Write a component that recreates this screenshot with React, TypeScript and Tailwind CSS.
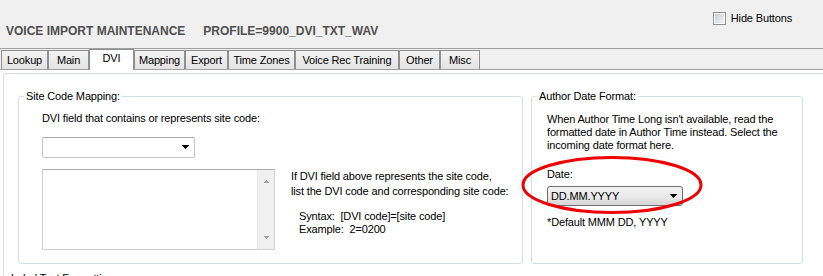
import React from 'react';

const tabs = [
  { label: 'Lookup', w: 'w-[47px]' },
  { label: 'Main', w: 'w-[41px]' },
  { label: 'DVI', w: 'w-[45px]', active: true },
  { label: 'Mapping', w: 'w-[51px]' },
  { label: 'Export', w: 'w-[43px]' },
  { label: 'Time Zones', w: 'w-[67px]' },
  { label: 'Voice Rec Training', w: 'w-[104px]' },
  { label: 'Other', w: 'w-[41px]' },
  { label: 'Misc', w: 'w-[40px]' },
];

function Caret({ className = '' }: { className?: string }) {
  return (
    <svg width="9" height="5" viewBox="0 0 9 5" className={className} shapeRendering="crispEdges">
      <path d="M1 0h7v1H1zM2 1h5v1H2zM3 2h3v1H3zM4 3h1v1H4z" fill="#000" />
    </svg>
  );
}

function ScrollArrow({ up }: { up?: boolean }) {
  return (
    <svg width="7" height="4" viewBox="0 0 7 4" shapeRendering="crispEdges">
      <path d={up ? 'M3 0h1v1H3zM2 1h3v1H2zM1 2h5v1H1z' : 'M1 0h5v1H1zM2 1h3v1H2zM3 2h1v1H3z'} fill="#a3a3a3" />
    </svg>
  );
}

export default function App() {
  return (
    <div className="relative w-[823px] h-[276px] overflow-hidden bg-[#f0f0f0] flex flex-col text-[11px] leading-[13px] tracking-[-0.15px] text-black font-['Liberation_Sans','DejaVu_Sans',sans-serif]">
      {/* header */}
      <div className="h-[48px] flex justify-between items-start shrink-0">
        <div className="pl-[6px] pt-[24px] text-[12px] leading-[14px] tracking-normal font-bold text-[#4f4f4f] whitespace-nowrap">
          <span>VOICE IMPORT MAINTENANCE</span>
          <span className="ml-[18px]">PROFILE=9900_DVI_TXT_WAV</span>
        </div>
        <label className="flex items-center gap-[5px] pt-[12px] pr-[31px]">
          <div className="w-[13px] h-[13px] border border-[#8e8f8f] bg-white p-[1px]">
            <div className="w-full h-full bg-gradient-to-br from-[#c9cdd3] to-[#f4f4f4]" />
          </div>
          <span>Hide Buttons</span>
        </label>
      </div>

      {/* tabs */}
      <div className="h-[22px] shrink-0 border-t border-b border-[#a0a0a0] flex items-end pl-[1px]">
        {tabs.map(t =>
          t.active ? (
            <div
              key={t.label}
              className={`${t.w} h-[21px] -mb-[1px] bg-white border border-b-0 border-[#8e8f8f] flex justify-center pt-[2px] relative z-10`}
            >
              {t.label}
            </div>
          ) : (
            <div
              key={t.label}
              className={`${t.w} h-[19px] bg-gradient-to-b from-[#f3f3f3] to-[#e3e3e3] border border-b-0 border-[#8e8f8f] flex justify-center pt-[3px]`}
            >
              {t.label}
            </div>
          )
        )}
      </div>

      {/* content */}
      <div className="flex-1 bg-white pt-[3px] pl-[3px]">
        <div className="h-full border-l border-t border-[#d9dfe6] rounded-tl-[3px]">
          <div className="flex gap-[8px] pl-[14px] pt-[16px]">
            <fieldset className="w-[505px] h-[174px] border border-[#d5dfe5] rounded-[3px]">
              <legend className="ml-[5px] px-[2px]">Site Code Mapping:</legend>
              <div className="pl-[23px]">
                <div className="mt-[9px]">DVI field that contains or represents site code:</div>
                <div className="mt-[12px] w-[153px] h-[21px] border border-[#c5c5c5] border-t-[#a9a9a9] rounded-[2px] bg-white flex items-center justify-end pr-[4px]">
                  <Caret />
                </div>
                <div className="mt-[11px] flex">
                  <div className="w-[233px] h-[81px] border border-[#cfd3d8] border-t-[#abadb3] bg-white flex justify-end">
                    <div className="w-[17px] h-full bg-[#f0f0f0] border-l border-[#e6e6e6] flex flex-col items-center justify-between pt-[10px] pb-[9px]">
                      <ScrollArrow up />
                      <ScrollArrow />
                    </div>
                  </div>
                  <div className="ml-[16px] whitespace-nowrap">
                    <div className="leading-[15px]">
                      If DVI field above represents the site code,
                      <br />
                      list the DVI code and corresponding site code:
                    </div>
                    <div className="mt-[11px] pl-[8px]">
                      <div>Syntax:&nbsp; [DVI code]=[site code]</div>
                      <div>Example:&nbsp; 2=0200</div>
                    </div>
                  </div>
                </div>
              </div>
            </fieldset>

            <fieldset className="w-[272px] h-[174px] border border-[#d5dfe5] rounded-[3px]">
              <legend className="ml-[5px] px-[2px]">Author Date Format:</legend>
              <div className="pl-[15px]">
                <div className="mt-[10px] whitespace-nowrap">
                  When Author Time Long isn't available, read the
                  <br />
                  formatted date in Author Time instead. Select the
                  <br />
                  incoming date format here.
                </div>
                <div className="mt-[16px]">Date:</div>
                <div className="mt-[5px] w-[136px] h-[20px] border border-[#707070] rounded-[3px] bg-gradient-to-b from-[#f2f2f2] via-[#ebebeb] to-[#d6d6d6] flex items-center justify-between pl-[3px] pr-[4px]">
                  <span>DD.MM.YYYY</span>
                  <Caret />
                </div>
                <div className="mt-[10px]">*Default MMM DD, YYYY</div>
              </div>
            </fieldset>
          </div>
          <div className="mt-[8px] pl-[7px]">Label Text Formatting:</div>
        </div>
      </div>

      {/* red annotation ellipse */}
      <svg className="absolute left-[520px] top-[154px]" width="186" height="62" viewBox="0 0 186 62">
        <ellipse cx="92" cy="31" rx="89" ry="27.5" fill="none" stroke="#ee0000" strokeWidth="3" />
      </svg>
    </div>
  );
}
